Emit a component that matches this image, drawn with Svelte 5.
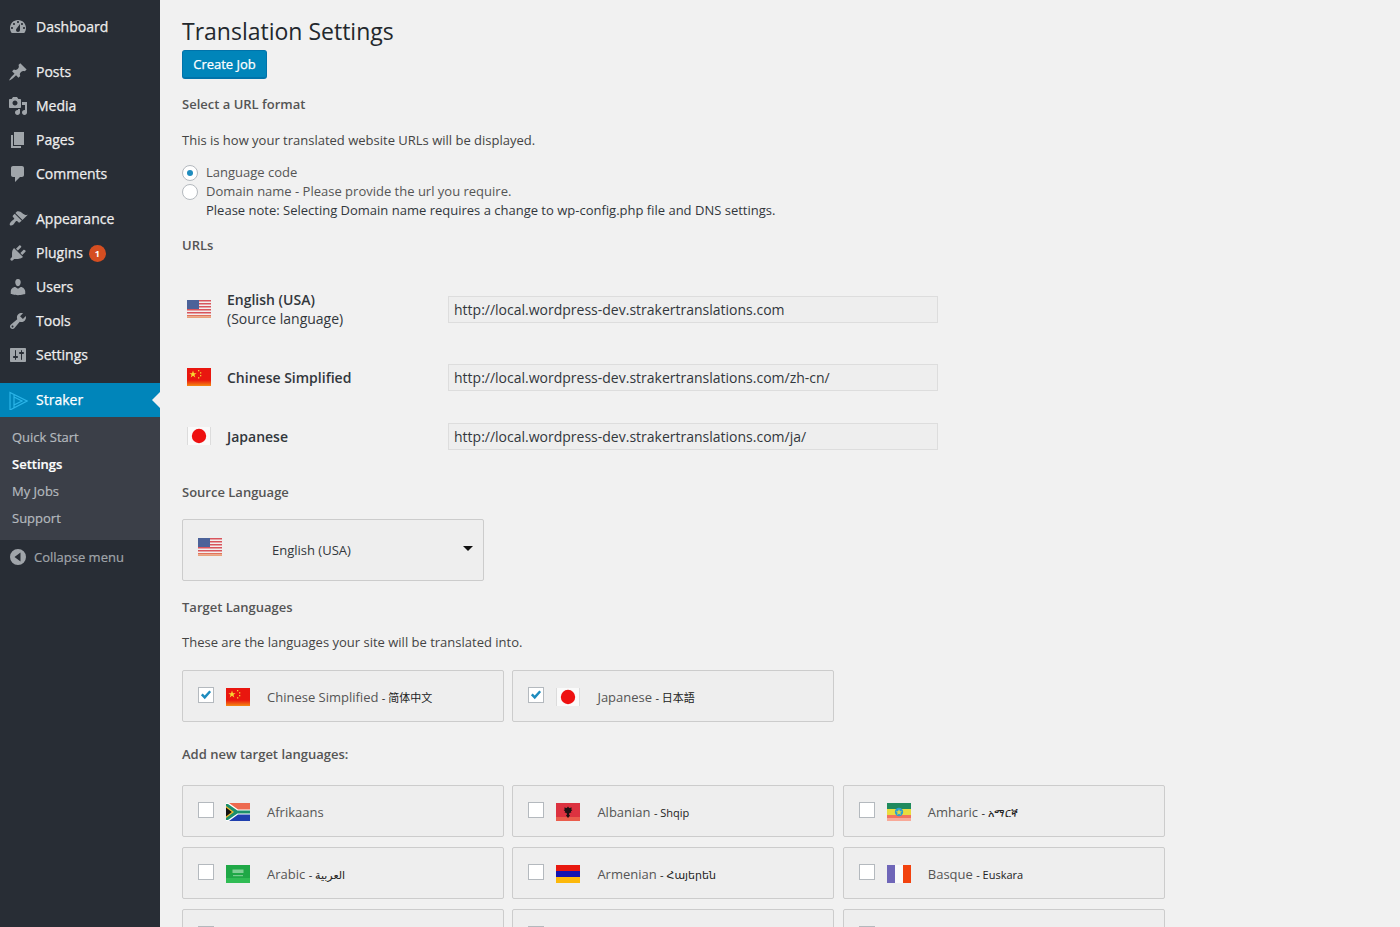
<script>
	const icons = {
		dashboard: 'M3.76 16h12.48c1.1-1.37 1.76-3.11 1.76-5 0-4.42-3.58-8-8-8s-8 3.58-8 8c0 1.89.66 3.63 1.76 5zM10 4c.55 0 1 .45 1 1s-.45 1-1 1-1-.45-1-1 .45-1 1-1zM6 6c.55 0 1 .45 1 1s-.45 1-1 1-1-.45-1-1 .45-1 1-1zm8 0c.55 0 1 .45 1 1s-.45 1-1 1-1-.45-1-1 .45-1 1-1zm-5.37 5.55L12 7v6c0 1.1-.9 2-2 2s-2-.9-2-2c0-.57.24-1.08.63-1.45zM4 10c.55 0 1 .45 1 1s-.45 1-1 1-1-.45-1-1 .45-1 1-1zm12 0c.55 0 1 .45 1 1s-.45 1-1 1-1-.45-1-1 .45-1 1-1z',
		posts: 'M10.44 3.02l1.82-1.82 6.36 6.35-1.83 1.82c-1.05-.68-2.48-.57-3.41.36l-.75.75c-.92.93-1.04 2.35-.35 3.41l-1.83 1.82-2.41-2.41-2.8 2.79c-.42.42-3.38 2.71-3.8 2.29s1.86-3.39 2.28-3.81l2.79-2.79L4.1 9.36l1.83-1.82c1.05.69 2.48.57 3.4-.36l.75-.75c.93-.92 1.05-2.35.36-3.41z',
		media: 'M13 11V4c0-.55-.45-1-1-1h-1.67L9 1H5L3.67 3H2c-.55 0-1 .45-1 1v7c0 .55.45 1 1 1h10c.55 0 1-.45 1-1zM7 4.5c1.38 0 2.5 1.12 2.5 2.5S8.38 9.5 7 9.5 4.5 8.38 4.5 7 5.62 4.5 7 4.5zM14 6h5v10.5c0 1.38-1.12 2.5-2.5 2.5S14 17.88 14 16.5s1.12-2.5 2.5-2.5c.17 0 .34.02.5.05V9h-3V6zm-4 8.05V13h2v3.5c0 1.38-1.12 2.5-2.5 2.5S7 17.88 7 16.5 8.12 14 9.5 14c.17 0 .34.02.5.05z',
		pages: 'M6 15V2h10v13H6zm-1 1h8v2H3V5h2v11z',
		comments: 'M5 2h9c1.1 0 2 .9 2 2v7c0 1.1-.9 2-2 2h-2l-5 5v-5H5c-1.1 0-2-.9-2-2V4c0-1.1.9-2 2-2z',
		appearance: 'M14.48 11.06L7.41 3.99l1.5-1.5c.5-.56 2.3-.47 3.51.32 1.21.8 1.43 1.28 2.91 2.1 1.18.64 2.45 1.26 4.45.85zm-.71.71L6.7 4.7 4.93 6.47c-.39.39-.39 1.02 0 1.41l1.06 1.06c.39.39.39 1.03 0 1.42-.6.6-1.43 1.11-2.21 1.69-.35.26-.7.53-1.01.84-1.05 1.05-1.37 2.7-.72 3.35s2.3.33 3.35-.72c.31-.31.58-.66.84-1.01.58-.78 1.09-1.61 1.69-2.21.39-.39 1.03-.39 1.42 0l1.06 1.06c.39.39 1.02.39 1.41 0z',
		plugins: 'M13.11 4.36L9.87 7.6 8 5.73l3.24-3.24c.35-.34 1.05-.2 1.56.32.52.51.66 1.21.31 1.55zm-8 1.77l.91-1.12 9.01 9.01-1.19.84c-.71.71-2.63 1.16-3.82 1.16H6.14L4.9 17.26c-.59.59-1.54.59-2.12 0-.59-.58-.59-1.53 0-2.12l1.24-1.24v-3.88c0-1.13.4-3.19 1.09-3.89zm7.26 3.97l3.24-3.24c.34-.35 1.04-.21 1.55.31.52.51.66 1.21.31 1.55l-3.24 3.25z',
		users: 'M10 9.25c-2.27 0-2.73-3.44-2.73-3.44C7 4.02 7.82 2 9.97 2c2.16 0 2.98 2.02 2.71 3.81 0 0-.41 3.44-2.68 3.44zm0 2.57L12.72 10c2.39 0 4.52 2.33 4.52 4.53v2.49s-3.65 1.13-7.24 1.13c-3.65 0-7.24-1.13-7.24-1.13v-2.49c0-2.25 1.94-4.48 4.47-4.48z',
		tools: 'M16.68 9.77c-1.34 1.34-3.3 1.67-4.95.99l-5.41 6.52c-.99.99-2.59.99-3.58 0s-.99-2.59 0-3.57l6.52-5.42c-.68-1.65-.35-3.61.99-4.95 1.28-1.28 3.12-1.62 4.72-1.06l-2.89 2.89 2.82 2.82 2.86-2.87c.53 1.58.18 3.39-1.08 4.65zM3.81 16.21c.4.39 1.04.39 1.43 0 .4-.4.4-1.04 0-1.43-.39-.4-1.03-.4-1.43 0-.39.39-.39 1.03 0 1.43z',
		settings: 'M18 16V4c0-.55-.45-1-1-1H3c-.55 0-1 .45-1 1v12c0 .55.45 1 1 1h14c.55 0 1-.45 1-1zM8 11h1c.55 0 1 .45 1 1s-.45 1-1 1H8v1.5c0 .28-.22.5-.5.5s-.5-.22-.5-.5V13H6c-.55 0-1-.45-1-1s.45-1 1-1h1V5.5c0-.28.22-.5.5-.5s.5.22.5.5V11zm5-2h-1c-.55 0-1-.45-1-1s.45-1 1-1h1V5.5c0-.28.22-.5.5-.5s.5.22.5.5V7h1c.55 0 1 .45 1 1s-.45 1-1 1h-1v5.5c0 .28-.22.5-.5.5s-.5-.22-.5-.5V9z'
	};

	const menuGroups = [
		[{ id: 'dashboard', label: 'Dashboard' }],
		[
			{ id: 'posts', label: 'Posts' },
			{ id: 'media', label: 'Media' },
			{ id: 'pages', label: 'Pages' },
			{ id: 'comments', label: 'Comments' }
		],
		[
			{ id: 'appearance', label: 'Appearance' },
			{ id: 'plugins', label: 'Plugins', badge: 1 },
			{ id: 'users', label: 'Users' },
			{ id: 'tools', label: 'Tools' },
			{ id: 'settings', label: 'Settings' }
		]
	];

	const subMenu = ['Quick Start', 'Settings', 'My Jobs', 'Support'];

	const urls = [
		{ flag: 'us', name: 'English (USA)', note: '(Source language)', url: 'http://local.wordpress-dev.strakertranslations.com', cls: 'first' },
		{ flag: 'cn', name: 'Chinese Simplified', url: 'http://local.wordpress-dev.strakertranslations.com/zh-cn/', cls: 'second' },
		{ flag: 'jp', name: 'Japanese', url: 'http://local.wordpress-dev.strakertranslations.com/ja/', cls: 'third' }
	];

	const targets = [
		{ flag: 'cn', name: 'Chinese Simplified', native: '简体中文', checked: true },
		{ flag: 'jp', name: 'Japanese', native: '日本語', checked: true }
	];

	// the last row is only just on screen, its labels sit below the fold
	const available = [
		{ flag: 'za', name: 'Afrikaans' },
		{ flag: 'al', name: 'Albanian', native: 'Shqip' },
		{ flag: 'et', name: 'Amharic', native: 'አማርኛ' },
		{ flag: 'sa', name: 'Arabic', native: 'العربية' },
		{ flag: 'am', name: 'Armenian', native: 'Հայերեն' },
		{ flag: 'fr', name: 'Basque', native: 'Euskara' },
		{},
		{},
		{}
	];
</script>

{#snippet flag(code)}
	<svg class="flag" viewBox="0 0 24 18" aria-hidden="true">
		{#if code === 'us'}
			<rect width="24" height="18" fill="#f3eeee" />
			{#each [0, 3, 6, 9, 12] as y}
				<rect y={y} width="24" height="1.5" fill="#d8545c" />
			{/each}
			<rect y="15" width="24" height="1.5" fill="#e2725a" />
			<rect y="16.5" width="24" height="1.5" fill="#e9a27a" />
			<rect width="12" height="9" fill="#4c6299" />
		{:else if code === 'cn'}
			<rect width="24" height="18" fill="#e9160f" />
			<rect y="12" width="24" height="6" fill="url(#flagFade)" />
			<polygon points="6,2.6 6.9,5.2 9.6,5.2 7.4,6.8 8.3,9.4 6,7.8 3.7,9.4 4.6,6.8 2.4,5.2 5.1,5.2" fill="#f8dc32" />
			<rect x="11" y="2" width="1.3" height="1.3" fill="#f5c832" />
			<rect x="13" y="4.2" width="1.3" height="1.3" fill="#f5c832" />
			<rect x="13" y="7" width="1.3" height="1.3" fill="#f5c832" />
			<rect x="11" y="9.2" width="1.3" height="1.3" fill="#f5c832" />
		{:else if code === 'jp'}
			<rect width="24" height="18" fill="#fafafa" />
			<rect width="0.6" height="18" fill="#c9c9c9" />
			<rect x="23.400" width="0.6" height="18" fill="#c9c9c9" />
			<circle cx="12" cy="9" r="7.200" fill="#ee1111" />
		{:else if code === 'za'}
			<rect width="24" height="9" fill="#ed6a50" />
			<rect y="9" width="24" height="9" fill="#1f3fae" />
			<polygon points="0,0 3,0 12,6.5 24,6.5 24,11.5 12,11.5 3,18 0,18" fill="#fff" />
			<polygon points="0,1 2,1 11.4,7.6 24,7.6 24,10.4 11.4,10.4 2,17 0,17" fill="#1c8f6c" />
			<polygon points="0,3 8,9 0,15" fill="#f3b92e" />
			<polygon points="0,4.6 5.8,9 0,13.4" fill="#111" />
		{:else if code === 'al'}
			<rect width="24" height="18" fill="#dc3240" />
			<rect y="14" width="24" height="4" fill="#ea5c4c" />
			<path d="M12 3.5l1.2 1.5 2.6-.6-.6 2.2 1.2.4-1.6 1.4.6 1.2-2 .4-.4 1.4 1 1.2-2 2.3-2-2.3 1-1.2-.4-1.4-2-.4.6-1.2-1.6-1.4 1.2-.4-.6-2.2 2.6.6z" fill="#1d1113" />
		{:else if code === 'et'}
			<rect width="24" height="6" fill="#1f8a5e" />
			<rect y="6" width="24" height="6" fill="#e9dc3e" />
			<rect y="12" width="24" height="6" fill="#f3735e" />
			<rect y="15" width="24" height="3" fill="#f8a998" />
			<circle cx="12" cy="9" r="4.200" fill="#2ba0d0" />
			<polygon points="12,6 12.9,8.2 15,8.3 13.4,9.7 13.9,11.9 12,10.7 10.1,11.9 10.6,9.7 9,8.3 11.1,8.2" fill="#d8d94a" />
		{:else if code === 'sa'}
			<rect width="24" height="18" fill="#1fa846" />
			<rect y="13" width="24" height="5" fill="#30bc54" />
			<rect x="6.500" y="4.500" width="11" height="3.500" fill="#a9dfb6" opacity="0.7" />
			<rect x="7" y="10.500" width="10" height="0.6" fill="#cfeed6" />
		{:else if code === 'am'}
			<rect width="24" height="6" fill="#e8180f" />
			<rect y="6" width="24" height="6" fill="#1414b0" />
			<rect y="12" width="24" height="6" fill="#fcb80a" />
		{:else if code === 'fr'}
			<rect width="8" height="18" fill="#6f66b8" />
			<rect x="8" width="8" height="18" fill="#fafafa" />
			<rect x="16" width="8" height="18" fill="#f2420e" />
		{:else}
			<rect width="24" height="18" fill="#999" />
		{/if}
	</svg>
{/snippet}

{#snippet langCard(lang)}
	<label class="card">
		<span class="check" class:on={lang.checked}>
			{#if lang.checked}
				<svg viewBox="0 0 16 16" aria-hidden="true"><path d="M2.200 8.200l2-2 2.300 2.500 5.300-5.900 2 1.800-7.200 8.300z" /></svg>
			{/if}
		</span>
		{#if lang.flag}{@render flag(lang.flag)}{/if}
		{#if lang.name}
			<span class="lang-name">{lang.name}{#if lang.native}{' '}<small>- {lang.native}</small>{/if}</span>
		{/if}
	</label>
{/snippet}

<div class="page">
	<svg class="defs" width="0" height="0" aria-hidden="true">
		<defs>
			<linearGradient id="flagFade" x1="0" y1="0" x2="0" y2="1">
				<stop offset="0" stop-color="#e9160f" />
				<stop offset="1" stop-color="#f58a12" />
			</linearGradient>
		</defs>
	</svg>

	<nav class="sidebar">
		{#each menuGroups as group}
			<ul class="menu-group">
				{#each group as item}
					<li class="menu-item">
						<svg class="menu-icon" viewBox="0 0 20 20" aria-hidden="true"><path fill-rule="evenodd" d={icons[item.id]} /></svg>
						<span class="menu-label">{item.label}</span>
						{#if item.badge}<span class="badge">{item.badge}</span>{/if}
					</li>
				{/each}
			</ul>
		{/each}

		<div class="menu-item current">
			<svg class="menu-icon straker" viewBox="0 0 20 20" aria-hidden="true">
				<path d="M2 2.500L19 11 2 20z M6 5v12.500 M6 7l8 4-8 4" />
			</svg>
			<span class="menu-label">Straker</span>
		</div>
		<ul class="submenu">
			{#each subMenu as sub}
				<li class:active={sub === 'Settings'}>{sub}</li>
			{/each}
		</ul>
		<div class="collapse">
			<svg viewBox="0 0 16 16" aria-hidden="true">
				<path fill-rule="evenodd" d="M8 0a8 8 0 1 1 0 16A8 8 0 0 1 8 0zM10.500 3.500L4.500 8l6 4.500z" />
			</svg>
			<span>Collapse menu</span>
		</div>
	</nav>

	<main class="content">
		<h1>Translation Settings</h1>
		<button class="primary" type="button">Create Job</button>

		<h3 class="url-format">Select a URL format</h3>
		<p class="hint">This is how your translated website URLs will be displayed.</p>

		<div class="radios">
			<div class="radio-row">
				<span class="radio on"></span>
				<span class="radio-label">Language code</span>
			</div>
			<div class="radio-row">
				<span class="radio"></span>
				<span class="radio-label">Domain name - Please provide the url you require.<br /><span class="note">Please note: Selecting Domain name requires a change to wp-config.php file and DNS settings.</span></span>
			</div>
		</div>

		<h3 class="urls-title">URLs</h3>
		{#each urls as row}
			<div class="url-row {row.cls}">
				{@render flag(row.flag)}
				<div class="url-label">
					<div class="strong">{row.name}</div>
					{#if row.note}<div>{row.note}</div>{/if}
				</div>
				<input class="url-input" type="text" readonly value={row.url} />
			</div>
		{/each}

		<h3 class="source-title">Source Language</h3>
		<div class="select">
			{@render flag('us')}
			<span class="select-value">English (USA)</span>
			<span class="caret"></span>
		</div>

		<h3 class="target-title">Target Languages</h3>
		<p class="hint">These are the languages your site will be translated into.</p>

		<div class="lang-grid selected">
			{#each targets as lang}
				{@render langCard(lang)}
			{/each}
		</div>

		<h3 class="add-title">Add new target languages:</h3>
		<div class="lang-grid available">
			{#each available as lang}
				{@render langCard(lang)}
			{/each}
		</div>
	</main>
</div>

<style>
	:global(html), :global(body) {
		margin: 0;
		height: 927px;
		overflow: hidden;
		background: #f1f1f1;
	}

	.page {
		display: flex;
		height: 927px;
		overflow: hidden;
		font-family: "Open Sans", "Noto Sans CJK SC", "DejaVu Sans", sans-serif;
		font-size: 13px;
		color: #444;
	}

	.defs {
		position: absolute;
	}

	.sidebar {
		flex: 0 0 160px;
		background: #282d35;
		padding-top: 10px;
		box-sizing: border-box;
	}

	ul {
		list-style: none;
		margin: 0;
		padding: 0;
	}

	.menu-group {
		margin-bottom: 11px;
	}

	.menu-item {
		position: relative;
		display: flex;
		align-items: center;
		height: 34px;
		padding-left: 8px;
		font-size: 14px;
		color: #eee;
		box-sizing: border-box;
	}

	.menu-label {
		margin-bottom: 2px;
		-webkit-text-stroke: 0.25px currentColor;
	}

	.menu-icon {
		width: 20px;
		height: 20px;
		margin-right: 8px;
		fill: #a0a5aa;
		flex: none;
	}

	.badge {
		display: inline-flex;
		align-items: center;
		justify-content: center;
		width: 17px;
		height: 17px;
		margin-left: 6px;
		border-radius: 50%;
		background: #d54e21;
		color: #fff;
		font-size: 9px;
		font-weight: 700;
	}

	.current {
		background: #0085ba;
		color: #fff;
	}

	.current::after {
		content: "";
		position: absolute;
		right: 0;
		top: 9px;
		border: 8px solid transparent;
		border-right-color: #f1f1f1;
		border-left-width: 0;
	}

	.straker {
		fill: none;
		stroke: #2bb5e8;
		stroke-width: 1.2;
	}

	.submenu {
		background: #3b3f48;
		padding: 7px 0 8px;
		font-size: 13px;
		color: #b4b9be;
		-webkit-text-stroke: 0.2px currentColor;
	}

	.submenu li {
		height: 27px;
		line-height: 27px;
		padding-left: 12px;
	}

	.submenu .active {
		color: #fff;
		font-weight: 600;
	}

	.collapse {
		display: flex;
		align-items: center;
		height: 34px;
		padding-left: 10px;
		color: #a0a5aa;
		font-size: 13px;
		-webkit-text-stroke: 0.2px currentColor;
	}

	.collapse svg {
		width: 16px;
		height: 16px;
		margin-right: 8px;
		fill: #a0a5aa;
	}

	.content {
		flex: 1;
		padding: 17px 0 0 22px;
		min-width: 0;
	}

	h1 {
		margin: 0 0 4px;
		font-size: 23px;
		line-height: 29px;
		font-weight: 400;
		color: #23282d;
	}

	h3 {
		margin: 0;
		font-size: 13px;
		line-height: 18px;
		font-weight: 600;
		color: #555;
	}

	.primary {
		display: block;
		height: 29px;
		width: 85px;
		padding: 0;
		border: 1px solid #0073aa;
		border-bottom-width: 2px;
		border-radius: 3px;
		background: #0085ba;
		color: #fff;
		font: 400 13px "Open Sans", sans-serif;
		-webkit-text-stroke: 0.25px #fff;
	}

	.url-format { margin-top: 16px; }
	.urls-title { margin-top: 16px; }
	.source-title { margin-top: 27px; }
	.target-title { margin-top: 17px; }
	.add-title { margin-top: 23px; }

	.hint {
		margin: 18px 0 0;
		line-height: 18px;
	}

	.target-title + .hint {
		margin-top: 17px;
	}

	.radios {
		margin-top: 14px;
		line-height: 19px;
	}

	.radio-row {
		display: flex;
		gap: 8px;
	}

	.radio {
		flex: none;
		display: flex;
		align-items: center;
		justify-content: center;
		width: 16px;
		height: 16px;
		margin-top: 2px;
		border: 1px solid #b4b9be;
		border-radius: 50%;
		background: #fff;
		box-sizing: border-box;
	}

	.radio.on::before {
		content: "";
		width: 6px;
		height: 6px;
		border-radius: 50%;
		background: #1e8cbe;
	}

	.radio-label {
		color: #555;
	}

	.note {
		color: #32373c;
	}

	.url-row {
		display: flex;
		align-items: center;
		height: 40px;
		padding-left: 5px;
		width: 756px;
	}

	.url-row.first { margin-top: 35px; }
	.url-row.second { margin-top: 28px; }
	.url-row.third { margin-top: 19px; }

	.flag {
		flex: none;
		display: block;
		width: 24px;
		height: 18px;
	}

	.url-label {
		flex: 0 0 237px;
		padding-left: 16px;
		box-sizing: border-box;
		font-size: 14px;
		line-height: 19px;
		color: #32373c;
	}

	.strong {
		font-weight: 600;
	}

	.url-input {
		width: 490px;
		height: 27px;
		padding: 0 5px;
		border: 1px solid #ddd;
		background: #eee;
		box-sizing: border-box;
		font: 14px "Open Sans", sans-serif;
		color: #32373c;
		outline: none;
	}

	.select {
		display: flex;
		align-items: center;
		width: 302px;
		height: 62px;
		margin-top: 18px;
		padding: 0 10px 0 15px;
		border: 1px solid #ccc;
		border-radius: 2px;
		background: #eee;
		box-sizing: border-box;
		color: #32373c;
	}

	.select .flag {
		margin-bottom: 6px;
	}

	.select-value {
		margin-left: 50px;
		flex: 1;
	}

	.caret {
		border: 5px solid transparent;
		border-top-color: #111;
		border-bottom-width: 0;
		margin-bottom: 3px;
	}

	.lang-grid {
		display: grid;
		grid-template-columns: repeat(3, 322px);
		column-gap: 8.4px;
		row-gap: 10px;
	}

	.selected { margin-top: 19px; }
	.available { margin-top: 22px; }

	.card {
		display: flex;
		align-items: center;
		height: 52px;
		padding-left: 15px;
		border: 1px solid #ccc;
		border-radius: 2px;
		background: #eee;
		box-sizing: border-box;
	}

	.check {
		flex: none;
		width: 16px;
		height: 16px;
		margin-right: 12px;
		margin-bottom: 2px;
		border: 1px solid #b4b9be;
		background: #fff;
		box-sizing: border-box;
	}

	.check svg {
		display: block;
		width: 14px;
		height: 14px;
		fill: #1e8cbe;
	}

	.card .flag {
		margin-top: 2px;
	}

	.lang-name {
		margin-left: 17px;
		margin-top: 2px;
		color: #555;
		white-space: nowrap;
	}

	small {
		font-size: 11px;
		color: #222;
	}
</style>
